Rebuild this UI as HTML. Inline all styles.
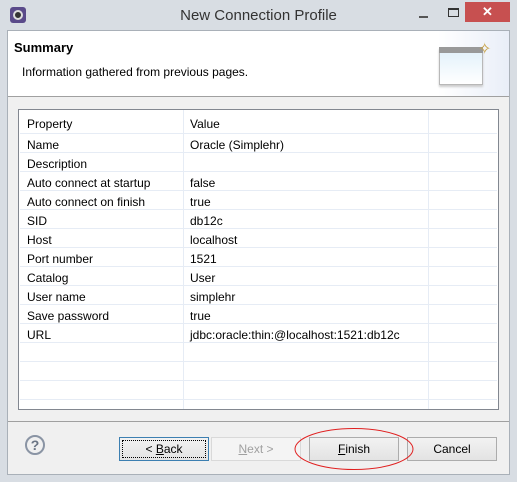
<!DOCTYPE html>
<html><head><style>
*{margin:0;padding:0;box-sizing:border-box}
body{width:517px;height:482px;background:#d8dde3;font-family:"Liberation Sans",sans-serif;font-size:12px;color:#000;position:relative;overflow:hidden}
.a{position:absolute}
.title{left:0;top:0;width:517px;height:30px;background:#d8dde3;text-align:center;font-size:15px;line-height:32px;color:#333}
.client{left:7px;top:30px;width:503px;height:445px;background:#f0f0f0;border:1px solid #a9b0b8}
.hdr{left:8px;top:31px;width:501px;height:66px;background:#fff;border-bottom:1px solid #a0a0a0}
.tbl{left:18px;top:109px;width:481px;height:301px;background:#fff;border:1px solid #828790}
.row{position:absolute;left:1px;width:477px;height:19px;border-bottom:1px solid #e6ecf5;line-height:23px}
.row span{position:absolute;left:7px}
.row b{font-weight:normal;position:absolute;left:170px}
.vl{position:absolute;top:0;width:1px;height:299px;background:#e6ecf5}
.btn{top:437px;height:24px;background:linear-gradient(#f2f2f2,#e3e3e3);border:1px solid #acacac;text-align:center;line-height:23px}
</style></head><body>
<div class="a title">New Connection Profile</div>
<div class="a" style="left:10px;top:7px;width:16px;height:16px;background:#5a4a8a;border-radius:3px"></div>
<div class="a" style="left:13px;top:10px;width:10px;height:10px;border:2px solid #ddd;border-radius:50%;background:#333"></div>
<div class="a" style="left:419px;top:16px;width:9px;height:2px;background:#555"></div>
<div class="a" style="left:448px;top:8px;width:11px;height:9px;border:1px solid #333;border-top-width:2px"></div>
<div class="a" style="left:465px;top:2px;width:45px;height:20px;background:#c75050;color:#fff;text-align:center;line-height:20px;font-size:13px;font-weight:bold">✕</div>
<div class="a client"></div>
<div class="a hdr">
 <div class="a" style="left:6px;top:9px;font-weight:bold;font-size:13px">Summary</div>
 <div class="a" style="left:14px;top:34px">Information gathered from previous pages.</div>
 <div class="a" style="left:430px;top:0;width:71px;height:65px;background:linear-gradient(90deg,#fff,#e9eef8)"></div>
 <div class="a" style="left:431px;top:16px;width:44px;height:38px;border:1px solid #b8b8b8;background:linear-gradient(#e0f0fa,#fff);box-shadow:0 2px 2px #ccc"></div>
 <div class="a" style="left:431px;top:16px;width:44px;height:6px;background:#999"></div>
 <div class="a" style="left:470px;top:8px;color:#c8a040;font-size:16px">✧</div>
</div>
<div class="a tbl">
 <div class="vl" style="left:164px"></div><div class="vl" style="left:409px"></div>
 <div class="row" style="top:0;height:24px;line-height:28px;border-bottom:1px solid #e6ecf5"><span>Property</span><b>Value</b></div>
 <div class="row" style="top:24px"><span>Name</span><b>Oracle (Simplehr)</b></div>
 <div class="row" style="top:43px"><span>Description</span></div>
 <div class="row" style="top:62px"><span>Auto connect at startup</span><b>false</b></div>
 <div class="row" style="top:81px"><span>Auto connect on finish</span><b>true</b></div>
 <div class="row" style="top:100px"><span>SID</span><b>db12c</b></div>
 <div class="row" style="top:119px"><span>Host</span><b>localhost</b></div>
 <div class="row" style="top:138px"><span>Port number</span><b>1521</b></div>
 <div class="row" style="top:157px"><span>Catalog</span><b>User</b></div>
 <div class="row" style="top:176px"><span>User name</span><b>simplehr</b></div>
 <div class="row" style="top:195px"><span>Save password</span><b>true</b></div>
 <div class="row" style="top:214px"><span>URL</span><b>jdbc:oracle:thin:@localhost:1521:db12c</b></div>
 <div class="row" style="top:233px"></div>
 <div class="row" style="top:252px"></div>
 <div class="row" style="top:271px"></div>
</div>
<div class="a" style="left:8px;top:421px;width:501px;height:1px;background:#a0a0a0"></div>
<div class="a" style="left:25px;top:435px;width:20px;height:20px;border:2px solid #8a94a4;border-radius:50%;text-align:center;line-height:17px;font-weight:bold;font-size:14px;color:#6a7484">?</div>
<div class="a btn" style="left:119px;width:90px;border-color:#3c7fb1;outline:1px dotted #000;outline-offset:-4px">&lt; <u>B</u>ack</div>
<div class="a btn" style="left:211px;width:90px;background:#f4f4f4;border-color:#d9d9d9;color:#a0a0a0"><u>N</u>ext &gt;</div>
<div class="a btn" style="left:309px;width:90px"><u>F</u>inish</div>
<div class="a btn" style="left:407px;width:90px">Cancel</div>
<svg class="a" style="left:0;top:0" width="517" height="482"><ellipse cx="354" cy="449" rx="59" ry="20.5" fill="none" stroke="#e02020" stroke-width="1"/></svg>
</body></html>
